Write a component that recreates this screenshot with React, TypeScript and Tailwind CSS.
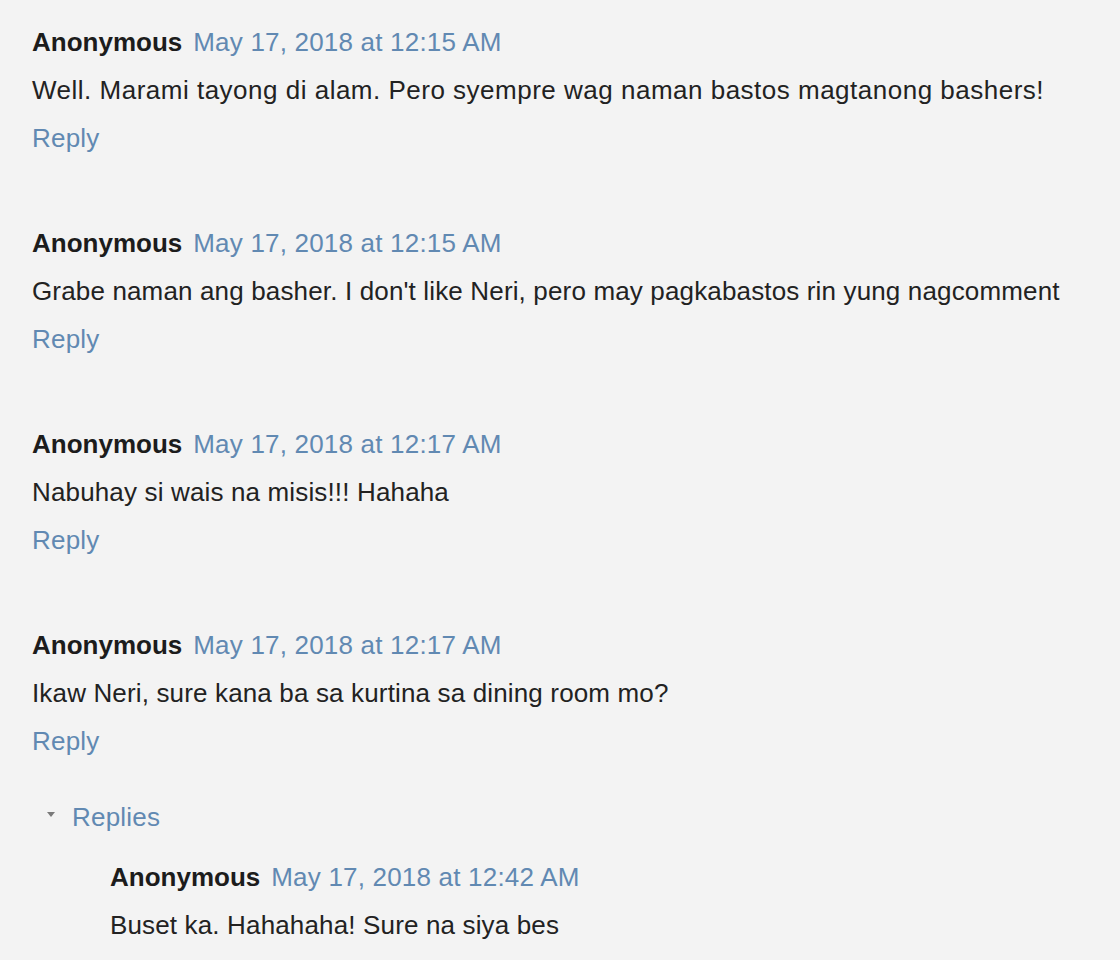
const comments = [
  { time: 'May 17, 2018 at 12:15 AM', body: 'Well. Marami tayong di alam. Pero syempre wag naman bastos magtanong bashers!', wide: true },
  { time: 'May 17, 2018 at 12:15 AM', body: "Grabe naman ang basher. I don't like Neri, pero may pagkabastos rin yung nagcomment", wide: false },
  { time: 'May 17, 2018 at 12:17 AM', body: 'Nabuhay si wais na misis!!! Hahaha', wide: false },
  { time: 'May 17, 2018 at 12:17 AM', body: 'Ikaw Neri, sure kana ba sa kurtina sa dining room mo?', wide: false },
];

function Header({ time }: { time: string }) {
  return (
    <div className="flex leading-[48px]">
      <span className="font-bold text-[#1c1c1c]">Anonymous</span>
      <span className="ml-[11px] tracking-[0.2px] text-[#6189b2]">{time}</span>
    </div>
  );
}

export default function App() {
  return (
    <div
      className="w-[1120px] h-[960px] overflow-hidden bg-[#f3f3f3] text-[26px] text-[#222] pl-[32px] pt-[18px]"
      style={{ fontFamily: '"Liberation Sans", Arial, sans-serif' }}
    >
      <div className="flex flex-col gap-[57px]">
        {comments.map((c, i) => (
          <div key={i} className="flex flex-col">
            <Header time={c.time} />
            <div className={c.wide ? 'leading-[48px] whitespace-nowrap tracking-[0.5px]' : 'leading-[48px] whitespace-nowrap tracking-[0.15px]'}>
              {c.body}
            </div>
            <div className="leading-[48px] tracking-[0.2px] text-[#6189b2]">Reply</div>
          </div>
        ))}
      </div>

      <div className="mt-[28px] flex items-center leading-[48px] pl-[15px]">
        <svg width="8" height="6" viewBox="0 0 8 6" className="mr-[17px] -mt-[4px]">
          <polygon points="0,0 8,0 4,5" fill="#7a7a7a" />
        </svg>
        <span className="tracking-[0.2px] text-[#6189b2]">Replies</span>
      </div>

      <div className="mt-[12px] pl-[78px] flex flex-col">
        <Header time="May 17, 2018 at 12:42 AM" />
        <div className="leading-[48px] tracking-[0.15px]">Buset ka. Hahahaha! Sure na siya bes</div>
      </div>
    </div>
  );
}
